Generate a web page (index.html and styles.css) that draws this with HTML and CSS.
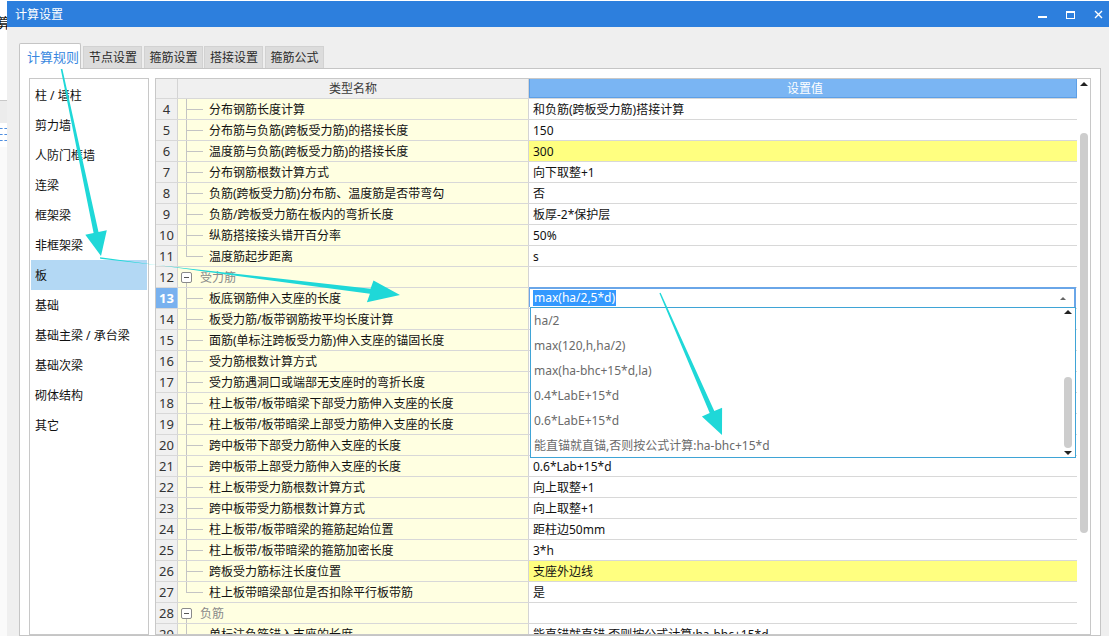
FILE: index.html
```html
<!DOCTYPE html>
<html lang="zh">
<head>
<meta charset="utf-8">
<title>计算设置</title>
<link rel="stylesheet" href="styles.css">
</head>
<body>
<div class="bgapp">
  <div class="bg-top"><span class="bg-glyph">算</span></div>
  <div class="bg-band"></div>
  <div class="bg-icon"><i></i><i></i><i></i></div>
  <div class="bg-rest"></div>
</div>
<div class="window">
  <div class="titlebar">
    <span class="title">计算设置</span>
    <div class="controls">
      <svg width="9" height="9" viewBox="0 0 9 9"><rect x="0" y="6" width="9" height="2" fill="#fff"/></svg>
      <svg width="9" height="9" viewBox="0 0 9 9"><rect x="0.5" y="1.5" width="8" height="7" fill="none" stroke="#fff"/><rect x="0" y="1" width="9" height="2" fill="#fff"/></svg>
      <svg width="9" height="9" viewBox="0 0 9 9"><path d="M1 1 L8 8 M8 1 L1 8" stroke="#fff" stroke-width="1.4"/></svg>
    </div>
  </div>
  <div class="content">
    <div class="tabs">
      <div class="tab active">计算规则</div>
      <div class="tab">节点设置</div>
      <div class="tab">箍筋设置</div>
      <div class="tab">搭接设置</div>
      <div class="tab">箍筋公式</div>
    </div>
    <div class="panel">
      <div class="list">
        <div class="item">柱 / 墙柱</div>
        <div class="item">剪力墙</div>
        <div class="item">人防门框墙</div>
        <div class="item">连梁</div>
        <div class="item">框架梁</div>
        <div class="item">非框架梁</div>
        <div class="item sel">板</div>
        <div class="item">基础</div>
        <div class="item">基础主梁 / 承台梁</div>
        <div class="item">基础次梁</div>
        <div class="item">砌体结构</div>
        <div class="item">其它</div>
      </div>
      <div class="table">
        <div class="grid">
          <div class="row head">
            <div class="num"></div>
            <div class="name">类型名称</div>
            <div class="val">设置值</div>
          </div>
          <div class="row"><div class="num">4</div><div class="name child">分布钢筋长度计算</div><div class="val">和负筋(跨板受力筋)搭接计算</div></div>
          <div class="row"><div class="num">5</div><div class="name child">分布筋与负筋(跨板受力筋)的搭接长度</div><div class="val">150</div></div>
          <div class="row"><div class="num">6</div><div class="name child">温度筋与负筋(跨板受力筋)的搭接长度</div><div class="val hl">300</div></div>
          <div class="row"><div class="num">7</div><div class="name child">分布钢筋根数计算方式</div><div class="val">向下取整+1</div></div>
          <div class="row"><div class="num">8</div><div class="name child">负筋(跨板受力筋)分布筋、温度筋是否带弯勾</div><div class="val">否</div></div>
          <div class="row"><div class="num">9</div><div class="name child">负筋/跨板受力筋在板内的弯折长度</div><div class="val">板厚-2*保护层</div></div>
          <div class="row"><div class="num">10</div><div class="name child">纵筋搭接接头错开百分率</div><div class="val">50%</div></div>
          <div class="row"><div class="num">11</div><div class="name child last">温度筋起步距离</div><div class="val">s</div></div>
          <div class="row"><div class="num">12</div><div class="name group"><span class="box"></span>受力筋</div><div class="val"></div></div>
          <div class="row"><div class="num cur">13</div><div class="name child">板底钢筋伸入支座的长度</div><div class="val"></div></div>
          <div class="row"><div class="num">14</div><div class="name child">板受力筋/板带钢筋按平均长度计算</div><div class="val"></div></div>
          <div class="row"><div class="num">15</div><div class="name child">面筋(单标注跨板受力筋)伸入支座的锚固长度</div><div class="val"></div></div>
          <div class="row"><div class="num">16</div><div class="name child">受力筋根数计算方式</div><div class="val"></div></div>
          <div class="row"><div class="num">17</div><div class="name child">受力筋遇洞口或端部无支座时的弯折长度</div><div class="val"></div></div>
          <div class="row"><div class="num">18</div><div class="name child">柱上板带/板带暗梁下部受力筋伸入支座的长度</div><div class="val"></div></div>
          <div class="row"><div class="num">19</div><div class="name child">柱上板带/板带暗梁上部受力筋伸入支座的长度</div><div class="val"></div></div>
          <div class="row"><div class="num">20</div><div class="name child">跨中板带下部受力筋伸入支座的长度</div><div class="val"></div></div>
          <div class="row"><div class="num">21</div><div class="name child">跨中板带上部受力筋伸入支座的长度</div><div class="val">0.6*Lab+15*d</div></div>
          <div class="row"><div class="num">22</div><div class="name child">柱上板带受力筋根数计算方式</div><div class="val">向上取整+1</div></div>
          <div class="row"><div class="num">23</div><div class="name child">跨中板带受力筋根数计算方式</div><div class="val">向上取整+1</div></div>
          <div class="row"><div class="num">24</div><div class="name child">柱上板带/板带暗梁的箍筋起始位置</div><div class="val">距柱边50mm</div></div>
          <div class="row"><div class="num">25</div><div class="name child">柱上板带/板带暗梁的箍筋加密长度</div><div class="val">3*h</div></div>
          <div class="row"><div class="num">26</div><div class="name child">跨板受力筋标注长度位置</div><div class="val hl">支座外边线</div></div>
          <div class="row"><div class="num">27</div><div class="name child last">柱上板带暗梁部位是否扣除平行板带筋</div><div class="val">是</div></div>
          <div class="row"><div class="num">28</div><div class="name group"><span class="box"></span>负筋</div><div class="val"></div></div>
          <div class="row"><div class="num">29</div><div class="name child">单标注负筋锚入支座的长度</div><div class="val">能直锚就直锚,否则按公式计算:ha-bhc+15*d</div></div>
        </div>
        <div class="vscroll">
          <span class="tri up"></span>
          <span class="thumb"></span>
        </div>
        <div class="combo">
          <div class="combo-edit"><span class="seltext">max(ha/2,5*d)</span><span class="tri small"></span></div>
          <div class="combo-list">
            <div class="opts">
              <div class="opt">ha/2</div>
              <div class="opt">max(120,h,ha/2)</div>
              <div class="opt">max(ha-bhc+15*d,la)</div>
              <div class="opt">0.4*LabE+15*d</div>
              <div class="opt">0.6*LabE+15*d</div>
              <div class="opt">能直锚就直锚,否则按公式计算:ha-bhc+15*d</div>
            </div>
            <div class="lscroll">
              <span class="tri up"></span>
              <span class="lthumb"></span>
              <span class="tri down"></span>
            </div>
          </div>
        </div>
      </div>
    </div>
  </div>
</div>
<svg class="annot" width="1109" height="636" viewBox="0 0 1109 636">
  <polygon fill="#1fd8d8" points="58.3,57.1 93.6,233.0 85.3,234.8 101,256 106.8,230.3 98.5,232.0 59.7,56.9"/>
  <polygon fill="#1fd8d8" points="100,257.3 369.9,293.8 366.9,302.2 400,295 373.5,280.4 370.5,288.8 100.2,258.7"/>
  <polygon fill="#1fd8d8" points="659.4,293.3 709.7,413.1 701.9,416.5 722,435 722.1,407.7 714.3,411.1 660.6,292.7"/>
</svg>
</body>
</html>
```

FILE: styles.css
```css
* { box-sizing: border-box; }

html, body {
  margin: 0;
  height: 636px;
  overflow: hidden;
}

body {
  display: flex;
  position: relative;
  background: #fff;
  font-family: "Noto Sans", "Noto Sans CJK SC", sans-serif;
  font-size: 12px;
  color: #111;
}

/* background application strip on the left */
.bgapp {
  width: 7px;
  flex: none;
  display: flex;
  flex-direction: column;
  overflow: hidden;
  background: #fff;
}
.bg-top { height: 100px; padding-top: 15px; }
.bg-glyph { display: block; margin-left: -3px; font-size: 14px; color: #111; line-height: 16px; }
.bg-band { height: 23px; border-top: 1px solid #c8c8c8; background: #ececec; }
.bg-icon { height: 24px; display: flex; flex-direction: column; gap: 5px; padding-top: 5px; }
.bg-icon i { display: block; height: 1px; width: 7px; border-top: 1px dashed #4f8fe0; }
.bg-rest { flex: 1; background: #fafafa; }

/* window */
.window {
  flex: 1;
  display: flex;
  flex-direction: column;
  margin-top: 1px;
  background: #efefef;
}

.titlebar {
  height: 26px;
  flex: none;
  display: flex;
  align-items: center;
  padding-left: 8px;
  padding-right: 6px;
  background: #2d7fdd;
  color: #fff;
  font-size: 12px;
}
.title { flex: 1; }
.controls { display: flex; gap: 19px; align-items: center; }
.controls svg { display: block; }

.content {
  flex: 1;
  display: flex;
  flex-direction: column;
  padding: 16px 8px 0 12px;
  min-height: 0;
}

/* tabs */
.tabs {
  height: 25px;
  flex: none;
  display: flex;
  align-items: flex-end;
}
.tab {
  height: 22px;
  width: 59px;
  margin-left: 1.5px;
  padding-left: 5px;
  line-height: 22px;
  background: #dcdcdc;
  border: 1px solid #d2d2d2;
  border-bottom: none;
  color: #2a2a2a;
  white-space: nowrap;
}
.tab.active {
  position: relative;
  z-index: 1;
  height: 26px;
  width: 62px;
  margin: 0 0 -1px 0;
  padding-left: 7px;
  padding-top: 2px;
  line-height: 22px;
  background: #fff;
  border-color: #c5c5c5;
  border-radius: 2px 2px 0 0;
  color: #3a88df;
  font-size: 13px;
}
.tab.active + .tab { margin-left: 2px; }

.panel {
  flex: 1;
  min-height: 0;
  display: flex;
  gap: 6px;
  padding: 9px 9px 0 9px;
  background: #fff;
  border: 1px solid #c5c5c5;
}

/* left list */
.list {
  width: 120px;
  flex: none;
  border: 1px solid #c8c8c8;
  padding: 1px;
  display: flex;
  flex-direction: column;
}
.item {
  height: 30px;
  line-height: 31px;
  padding-left: 4px;
  color: #111;
  white-space: nowrap;
}
.item.sel { background: #b3d8f4; }

/* table */
.table {
  flex: 1;
  position: relative;
  display: flex;
  align-items: flex-start;
  border: 1px solid #c8c8c8;
  overflow: hidden;
}
.grid { width: 921px; flex: none; }
.row {
  display: flex;
  height: 21px;
  border-bottom: 1px solid #d8d8d8;
}
.row.head { height: 20px; }
.num {
  width: 22px;
  flex: none;
  background: #f0f0f0;
  border-right: 1px solid #d4d4d4;
  text-align: center;
  line-height: 21px;
  font-size: 13px;
  color: #333;
  overflow: hidden;
}
.num.cur {
  background: #78b1ef;
  border-right-color: #a9cdf5;
  color: #fff;
  font-weight: bold;
}
.name {
  width: 351px;
  flex: none;
  background: #ffffe1;
  border-right: 1px solid #d4d4d4;
  line-height: 21px;
  white-space: nowrap;
  overflow: hidden;
}
.name.child {
  padding-left: 31px;
  background:
    linear-gradient(#c4c4c4, #c4c4c4) 8px 0 / 1px 21px no-repeat,
    linear-gradient(#c4c4c4, #c4c4c4) 9px 10px / 16px 1px no-repeat,
    #ffffe1;
}
.name.child.last {
  background:
    linear-gradient(#c4c4c4, #c4c4c4) 8px 0 / 1px 11px no-repeat,
    linear-gradient(#c4c4c4, #c4c4c4) 9px 10px / 16px 1px no-repeat,
    #ffffe1;
}
.name.group {
  display: flex;
  align-items: center;
  padding-left: 3px;
  color: #8a8a8a;
  background:
    linear-gradient(#c4c4c4, #c4c4c4) 8px 15px / 1px 6px no-repeat,
    #ffffe1;
}
.box {
  width: 11px;
  height: 11px;
  margin-right: 8px;
  border: 1px solid #8a8a8a;
  border-radius: 2px;
  background: linear-gradient(#555, #555) center / 5px 1px no-repeat, #fff;
}
.val {
  flex: 1;
  background: #fff;
  padding-left: 4px;
  line-height: 21px;
  white-space: nowrap;
  overflow: hidden;
}
.val.hl { background: #ffff80; }

.head .num, .head .name { background: #f0f0f0; }
.head .name { text-align: center; color: #3a3a3a; line-height: 20px; }
.head .val {
  background: #7ab5f3;
  border: 1px solid #5d9fe6;
  border-top: none;
  text-align: center;
  color: #fff;
  line-height: 20px;
}

/* main scrollbar */
.vscroll {
  width: 13px;
  flex: none;
  align-self: stretch;
  display: flex;
  flex-direction: column;
  align-items: center;
  padding-top: 3px;
  padding-left: 1px;
  background: #fff;
}
.tri {
  display: block;
  width: 0;
  height: 0;
  border-left: 4px solid transparent;
  border-right: 4px solid transparent;
}
.tri.up { border-bottom: 4px solid #222; }
.tri.down { border-top: 4px solid #222; }
.tri.small {
  border-left-width: 3px;
  border-right-width: 3px;
  border-bottom: 3px solid #666;
}
.thumb {
  display: block;
  margin-top: 47px;
  width: 8px;
  height: 400px;
  border-radius: 4px;
  background: #cdcdcd;
}

/* combo dropdown overlay */
.combo {
  position: absolute;
  left: 373px;
  top: 208px;
  width: 547px;
}
.combo-edit {
  height: 20px;
  display: flex;
  align-items: center;
  justify-content: space-between;
  padding: 0 8px 0 3px;
  background: #fff;
  border: 2px solid #6aa6e8;
  border-left-width: 1px;
  border-bottom: none;
}
.seltext {
  background: #3399ff;
  color: #fff;
  line-height: 16px;
  padding: 0 1px;
}
.combo-list {
  margin-left: 1px;
  width: 546px;
  height: 151px;
  display: flex;
  background: #fff;
  border: 1px solid #3fa4d6;
}
.opts { flex: 1; overflow: hidden; }
.opt {
  height: 25px;
  line-height: 25px;
  padding-left: 3px;
  color: #6a6a6a;
  white-space: nowrap;
}
.lscroll {
  width: 12px;
  flex: none;
  display: flex;
  flex-direction: column;
  align-items: center;
  padding: 2px 3px 0 0;
}
.lthumb {
  display: block;
  margin-top: 63px;
  width: 8px;
  height: 71px;
  border-radius: 4px;
  background: #cdcdcd;
}
.lscroll .tri.down { margin-top: 3px; }

/* annotation arrows */
.annot {
  position: absolute;
  left: 0;
  top: 0;
  pointer-events: none;
}
```
